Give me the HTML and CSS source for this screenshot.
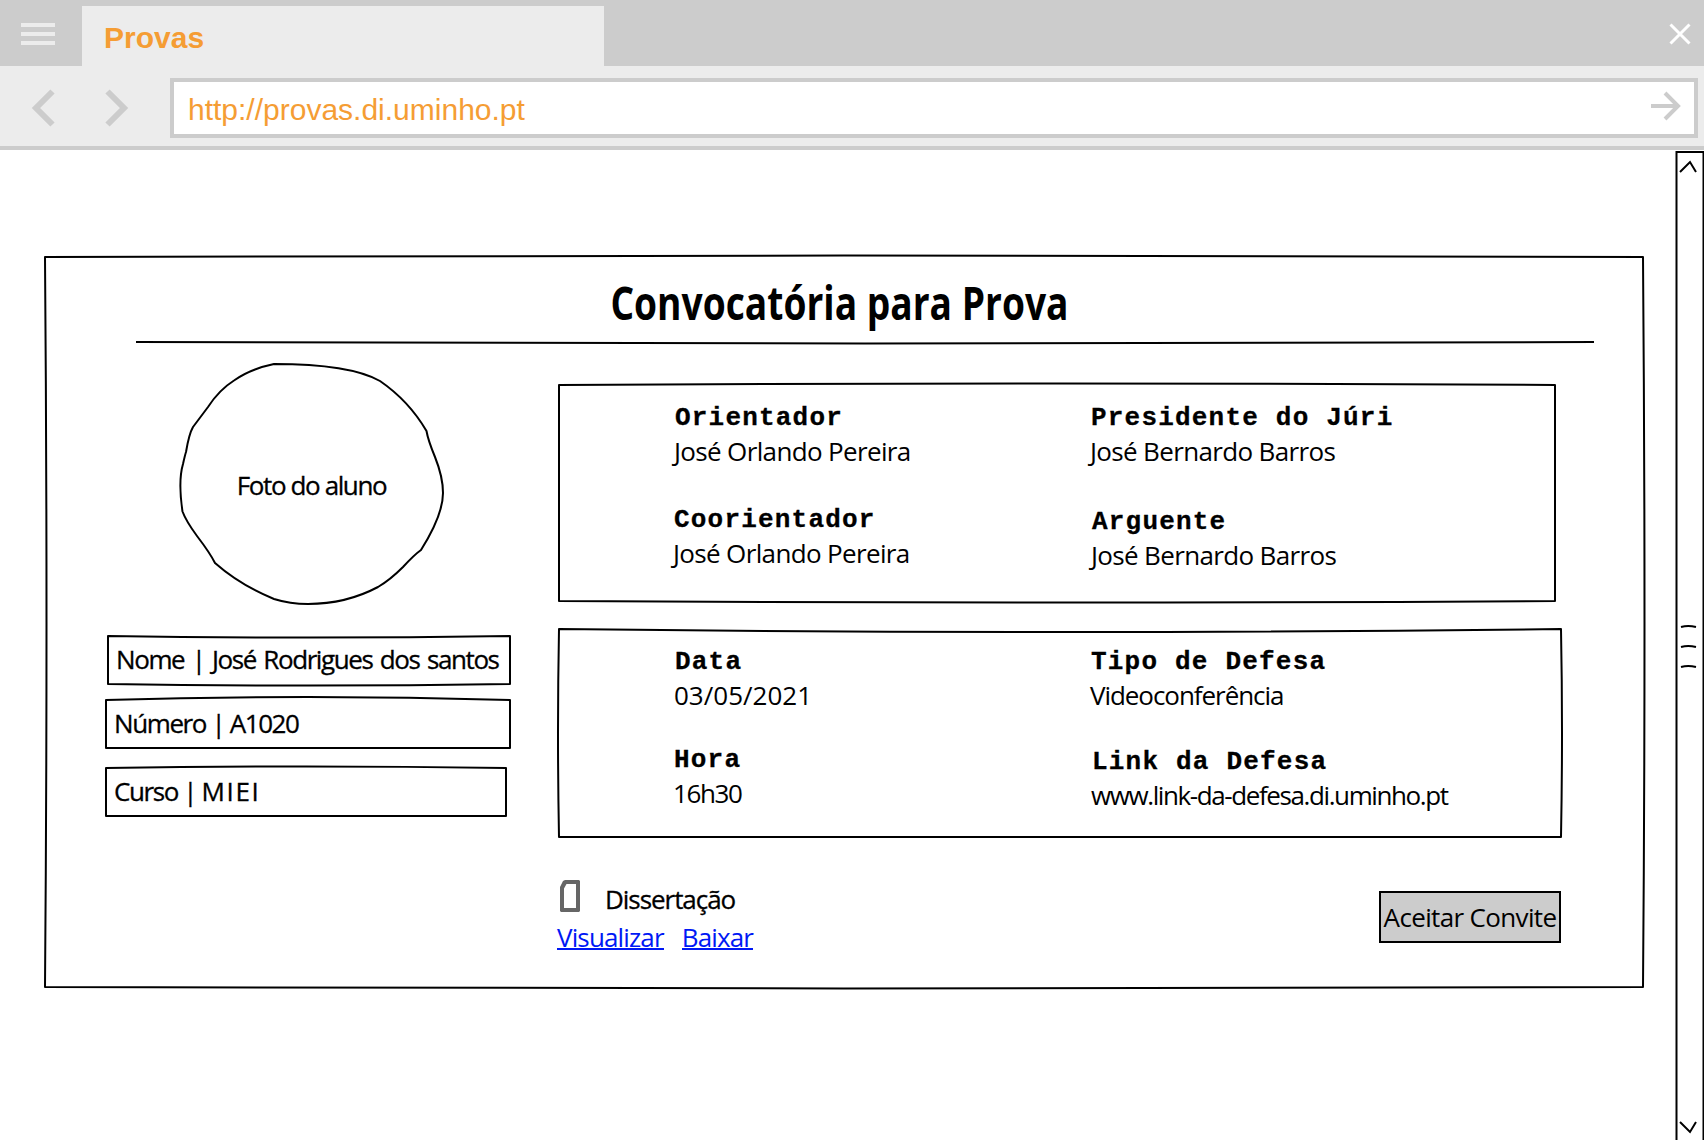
FILE: index.html
```html
<!DOCTYPE html>
<html lang="pt">
<head>
<meta charset="utf-8">
<title>Provas</title>
<link rel="stylesheet" href="styles.css">
</head>
<body>
<header class="tabs">
  <svg class="menu" width="34" height="22" viewBox="0 0 34 22"><path d="M0 2H34M0 11H34M0 20H34"/></svg>
  <div class="tab">Provas</div>
  <svg class="close" width="22" height="22" viewBox="0 0 22 22"><path d="M1.5 1.5L20.500 20.500M20.500 1.500L1.500 20.500"/></svg>
</header>
<nav class="toolbar">
  <svg class="chev" width="24" height="36" viewBox="0 0 24 36"><path d="M20.500 1.500L4 18L20.500 34.500"/></svg>
  <svg class="chev" width="24" height="36" viewBox="0 0 24 36"><path d="M3.500 1.500L20 18L3.500 34.500"/></svg>
  <div class="address">
    <span class="url">http://provas.di.uminho.pt</span>
    <svg class="go" width="30" height="28" viewBox="0 0 30 28"><path d="M0 14H27M14 1L27 14L14 27"/></svg>
  </div>
</nav>
<div class="viewport">
  <main class="card">
    <svg class="ink" viewBox="0 0 1598 730"><path d="M0 0Q799 -3 1598 0Q1601 365 1598 730Q799 733 0 730Q3 365 0 0Z"/></svg>
    <h1 class="title"><span>Convocatória para Prova</span></h1>
    <svg class="rule" width="1458" height="4" viewBox="0 0 1458 4"><path d="M0 1Q729 4 1458 1"/></svg>
    <div class="columns">
      <section class="student">
        <div class="photo">
          <svg class="ink" viewBox="0 0 263 240"><path d="M94 0Q170 0 200 17Q229 37 246.500 67Q248 76 255 93Q263 113 263 129Q263 151 241 186Q234 191 223 203Q210 216 198 223Q166 240 128 240Q110 240 94 235Q60 221 35 199Q30 189 17 172Q6 157 2.500 147.500Q-2 117 3 100Q5 91 6 88Q9 70 13 63L28 43Q39 26 54 16.500Q70 5 94 0Z"/></svg>
          <span class="tightest">Foto do aluno</span>
        </div>
        <div class="field name tightest">
          <svg class="ink" viewBox="0 0 402 48"><path d="M0 0Q201 3 402 0V48Q201 51 0 48Z"/></svg>
          <span>Nome | José Rodrigues dos santos</span>
        </div>
        <div class="field number tightest">
          <svg class="ink" viewBox="0 0 404 48"><path d="M0 0Q202 -6 404 0V48H0Z"/></svg>
          <span>Número | A1020</span>
        </div>
        <div class="field course tightest">
          <svg class="ink" viewBox="0 0 400 48"><path d="M0 0Q200 -3 400 0V48H0Z"/></svg>
          <span>Curso | <span class="wide">MIEI</span></span>
        </div>
      </section>
      <section class="details">
        <div class="panel jury">
          <svg class="ink" viewBox="0 0 996 216"><path d="M0 0Q498 -3 996 0V216Q498 219 0 216Z"/></svg>
          <dl class="left">
            <div class="item"><dt>Orientador</dt><dd class="tight">José Orlando Pereira</dd></div>
            <div class="item"><dt>Coorientador</dt><dd class="tight">José Orlando Pereira</dd></div>
          </dl>
          <dl class="right">
            <div class="item"><dt>Presidente do Júri</dt><dd class="tight">José Bernardo Barros</dd></div>
            <div class="item"><dt>Arguente</dt><dd class="tight">José Bernardo Barros</dd></div>
          </dl>
        </div>
        <div class="panel defense">
          <svg class="ink" viewBox="0 0 1002 208"><path d="M0 0Q501 6 1002 0Q1004 104 1002 208H0Q-2 104 0 0Z"/></svg>
          <dl class="left">
            <div class="item"><dt>Data</dt><dd>03/05/2021</dd></div>
            <div class="item"><dt>Hora</dt><dd class="tightest">16h30</dd></div>
          </dl>
          <dl class="right">
            <div class="item"><dt>Tipo de Defesa</dt><dd class="tighter">Videoconferência</dd></div>
            <div class="item"><dt>Link da Defesa</dt><dd class="tightest">www.link-da-defesa.di.uminho.pt</dd></div>
          </dl>
        </div>
        <div class="footer">
          <div class="document">
            <div class="file">
              <svg class="sheet" width="20" height="32" viewBox="0 0 20 32"><path fill-rule="evenodd" d="M5 0H19L20 1V31L19 32H1L0 31V7L3 1ZM6.500 4L4 8.500V28H16V4Z"/></svg>
              <span class="tighter">Dissertação</span>
            </div>
            <div class="links"><a>Visualizar</a><a>Baixar</a></div>
          </div>
          <button class="accept">Aceitar Convite</button>
        </div>
      </section>
    </div>
  </main>
  <svg class="scrollbar" width="28" height="990" viewBox="0 0 28 990">
    <path d="M0.500 990Q2 480 0.500 2H27.500V990M4 22L14 12L20 22M4 972L14 982L20 972M5 477Q12 475 20 477M5 497Q12 495 20 497M5 517Q12 515 20 517"/>
  </svg>
</div>
</body>
</html>
```
FILE: styles.css
```css
* { box-sizing: border-box; }
body {
  margin: 0;
  height: 1140px;
  display: flex;
  flex-direction: column;
  overflow: hidden;
  background: #fff;
  color: #000;
  font: 26px/32px "Open Sans", sans-serif;
}
svg { display: block; flex: none; fill: none; overflow: visible; }

.tight { letter-spacing: -0.65px; }
.tighter { letter-spacing: -1.05px; }
.tightest { letter-spacing: -1.4px; }
.wide { letter-spacing: 1.6px; }

.tabs { height: 66px; display: flex; align-items: flex-start; background: #ccc; padding: 6px 13px 0 21px; }
.menu { margin-top: 17px; stroke: #ececec; stroke-width: 4; }
.tab {
  margin-left: 27px;
  width: 522px;
  height: 60px;
  padding-left: 22px;
  background: #ececec;
  color: #f59d34;
  font: bold 30px/64px "Liberation Sans", Arial, sans-serif;
}
.close { margin: 17px 0 0 auto; stroke: #fff; stroke-width: 3; }

.toolbar {
  height: 84px;
  display: flex;
  align-items: center;
  padding: 4px 6px 0 32px;
  background: #ececec;
  border-bottom: 4px solid #ccc;
}
.chev { stroke: #ccc; stroke-width: 6; }
.chev + .chev { margin-left: 48px; }
.address {
  flex: 1;
  margin-left: 42px;
  height: 60px;
  padding: 0 13px 0 14px;
  display: flex;
  align-items: center;
  justify-content: space-between;
  border: 4px solid #ccc;
  background: #fff;
}
.url { color: #f59d34; font: 30px/34px "Liberation Sans", Arial, sans-serif; padding-top: 3px; }
.go { stroke: #ccc; stroke-width: 4; margin-bottom: 4px; }

.viewport { flex: 1; display: flex; justify-content: space-between; }
.scrollbar { stroke: #000; stroke-width: 2; }
.ink { position: absolute; inset: 0; width: 100%; height: 100%; stroke: #000; stroke-width: 2; stroke-linejoin: round; pointer-events: none; }

.card { position: relative; width: 1598px; height: 730px; margin: 107px 0 0 45px; }
.title { margin: 0; height: 84px; padding-right: 10px; text-align: center; font: bold 46px/90px "Open Sans", sans-serif; }
.title span { display: inline-block; transform: scaleX(0.808); }
.rule { margin-left: 91px; stroke: #000; stroke-width: 2; }
.columns { display: flex; padding-left: 61px; gap: 49px; }

.student { width: 404px; padding-top: 19px; -webkit-text-stroke: 0.3px; }
.photo { position: relative; width: 263px; height: 240px; margin-left: 74px; text-align: center; line-height: 242px; }
.field { position: relative; height: 48px; padding-left: 8px; line-height: 46px; white-space: nowrap; }
.name { width: 402px; margin: 32px 0 0 2px; word-spacing: 2px; }
.number { margin-top: 16px; }
.course { margin-top: 20px; width: 400px; }

.details { width: 1002px; padding-top: 40px; }
.panel { position: relative; display: flex; padding-left: 115px; }
.jury { width: 996px; height: 216px; padding-top: 18px; }
.defense { height: 208px; margin-top: 28px; padding-top: 18px; }
dl, dd { margin: 0; }
.left { width: 416px; }
.right { flex: 1; }
.item { height: 64px; white-space: nowrap; }
.left .item + .item { margin: 38px 0 0 -1px; }
.right .item + .item { margin: 40px 0 0 1px; }
.defense .left .item + .item { margin-top: 34px; }
.defense .right .item + .item { margin-top: 36px; }
dt {
  padding: 0 0 2px 1px;
  font: bold 26px/30px "Liberation Mono", "Courier New", monospace;
  letter-spacing: 1.2px;
  -webkit-text-stroke: 0.3px;
}

.footer { display: flex; justify-content: space-between; align-items: flex-start; padding: 43px 0 0 1px; }
.file { display: flex; gap: 25px; height: 32px; line-height: 38px; -webkit-text-stroke: 0.3px; }
.sheet { fill: #666; }
.links { display: flex; gap: 18px; margin-left: -3px; margin-top: 8px; line-height: 34px; letter-spacing: -0.85px; }
.links a { color: #0018f5; border-bottom: 2px solid; height: 30px; }
.accept {
  width: 182px; height: 52px; margin-top: 11px; padding: 0;
  border: 2px solid #000; background: #ccc; color: inherit; font: inherit; letter-spacing: -0.65px; white-space: nowrap;
}
```
